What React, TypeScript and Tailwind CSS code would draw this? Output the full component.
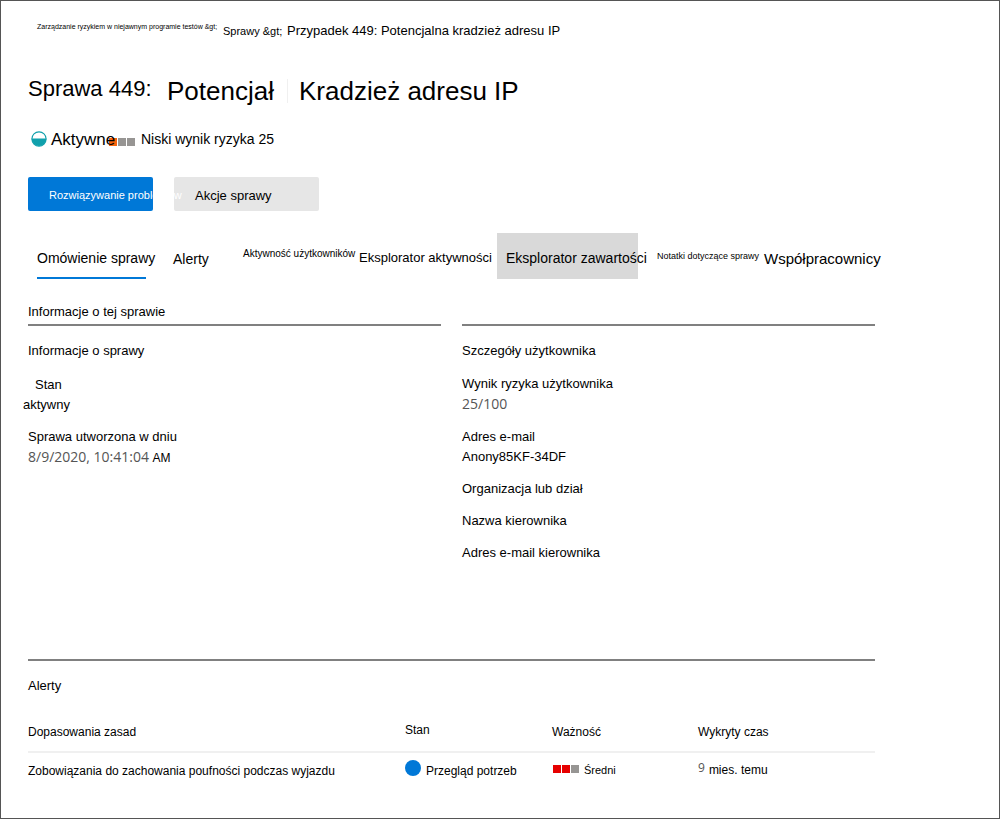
import type { ReactNode } from "react";

const tabBase = "flex h-[46px] shrink-0 items-center whitespace-nowrap";

function Squares({ colors }: { colors: string[] }) {
  return (
    <span className="flex gap-px" aria-hidden="true">
      {colors.map((color, i) => (
        <span key={i} className={`size-[8px] ${color}`} />
      ))}
    </span>
  );
}

function Field({ label, children }: { label: string; children?: ReactNode }) {
  return (
    <div>
      <dt>{label}</dt>
      {children && <dd>{children}</dd>}
    </div>
  );
}

function HalfCircle() {
  return (
    <svg width="16" height="16" viewBox="0 0 16 16" aria-hidden="true">
      <circle cx="8" cy="8" r="7.1" fill="#fff" stroke="#10a0ac" strokeWidth="1.1" />
      <path d="M.6 7.5h14.8a7.4 7.4 0 0 1-14.8 0Z" fill="#10a0ac" />
    </svg>
  );
}

export default function App() {
  return (
    <main className="min-h-screen border border-[#555] bg-white pr-[124px] pl-[27px] font-['Liberation_Sans',Arial,sans-serif] text-[13px] leading-5 text-black">
      <nav aria-label="Breadcrumb" className="flex h-[60px] items-center pl-[9px] whitespace-nowrap">
        <a href="#risk" className="w-[186px] pb-2 text-[7px]">
          Zarządzanie ryzykiem w niejawnym programie testów &amp;gt;
        </a>
        <a href="#cases" className="w-[64px] text-[11px]">Sprawy &amp;gt;</a>
        <span aria-current="page">Przypadek 449: Potencjalna kradzież adresu IP</span>
      </nav>

      <h1 className="flex h-[60px] items-center whitespace-nowrap text-[26px] leading-8">
        <span className="w-[139px] pb-1 text-[22px]">Sprawa 449:</span>
        <span className="w-[121px] border-r border-[#f0f0f0] leading-6">Potencjał</span>
        <span className="pl-[11px]">Kradzież adresu IP</span>
      </h1>

      <div className="flex h-[36px] items-center whitespace-nowrap pl-[3px]">
        <HalfCircle />
        <span className="relative z-10 w-[62px] pt-[2px] pl-1 text-[17px]">Aktywne</span>
        <span className="pt-[6px]">
          <Squares colors={["bg-[#f7630c]", "bg-[#979593]", "bg-[#979593]"]} />
        </span>
        <span className="pl-[6px] text-[14px]">Niski wynik ryzyka 25</span>
      </div>

      <div className="mt-5 flex gap-[21px] whitespace-nowrap">
        <button type="button" className="relative z-10 h-[34px] w-[125px] rounded-[2px] bg-[#0078d7] pt-[2px] pl-[21px] text-left text-[11px] text-white">
          Rozwiązywanie problemów
        </button>
        <button type="button" className="h-[34px] w-[145px] rounded-[2px] bg-[#e6e6e6] pt-1 pl-[21px] text-left">
          Akcje sprawy
        </button>
      </div>

      <nav aria-label="Sprawa" className="mt-[22px] flex pl-[9px] text-[14px]">
        <a href="#overview" aria-current="page" className={`${tabBase} w-[109px] border-b-2 border-[#0078d7] pt-[6px]`}>
          Omówienie sprawy
        </a>
        <a href="#alerts" className={`${tabBase} ml-[27px] w-[70px] pt-[6px]`}>Alerty</a>
        <a href="#activity" className={`${tabBase} w-[116px] pb-1 text-[10px]`}>Aktywność użytkowników</a>
        <a href="#activity-explorer" className={`${tabBase} w-[138px] pt-1 text-[13px]`}>Eksplorator aktywności</a>
        <a href="#content-explorer" className={`${tabBase} w-[141px] bg-[#d9d9d9] pt-1 pl-[9px]`}>Eksplorator zawartości</a>
        <a href="#notes" className={`${tabBase} ml-[19px] w-[107px] text-[9px]`}>Notatki dotyczące sprawy</a>
        <a href="#contributors" className={`${tabBase} pt-[6px] text-[15px]`}>Współpracownicy</a>
      </nav>

      <div className="mt-[22px] grid grid-cols-2 gap-x-[21px]">
        <section>
          <h2 className="h-[25px] border-b-2 border-[#808080] leading-[22px]">Informacje o tej sprawie</h2>
          <h3 className="mt-[15px]">Informacje o sprawy</h3>
          <dl className="mt-[14px] flex flex-col gap-3">
            <div>
              <dt className="pl-[7px]">Stan</dt>
              <dd className="-ml-[5px]">aktywny</dd>
            </div>
            <Field label="Sprawa utworzona w dniu">
              <span className="font-['Open_Sans',sans-serif] text-[14px] text-[#555]">8/9/2020, 10:41:04</span>{" "}
              <span className="text-[12px]">AM</span>
            </Field>
          </dl>
        </section>
        <section>
          <div className="h-[25px] border-b-2 border-[#808080]" />
          <h3 className="mt-[15px]">Szczegóły użytkownika</h3>
          <dl className="mt-[13px] flex flex-col gap-3">
            <Field label="Wynik ryzyka użytkownika">
              <span className="font-['Open_Sans',sans-serif] text-[14px] text-[#555]">25/100</span>
            </Field>
            <Field label="Adres e-mail">Anony85KF-34DF</Field>
            <Field label="Organizacja lub dział" />
            <Field label="Nazwa kierownika" />
            <Field label="Adres e-mail kierownika" />
          </dl>
        </section>
      </div>

      <section className="mt-24 border-t-2 border-[#808080] pt-[15px] pb-5">
        <h2>Alerty</h2>
        <table className="mt-[22px] w-full table-fixed text-left text-[12px]">
          <colgroup>
            <col className="w-[377px]" />
            <col className="w-[147px]" />
            <col className="w-[146px]" />
            <col />
          </colgroup>
          <thead>
            <tr className="h-[34px] border-b-2 border-[#f0f0f0] align-top *:font-normal">
              <th scope="col" className="pt-1">Dopasowania zasad</th>
              <th scope="col" className="pt-[2px]">Stan</th>
              <th scope="col" className="pt-1">Ważność</th>
              <th scope="col" className="pt-1">Wykryty czas</th>
            </tr>
          </thead>
          <tbody>
            <tr className="h-[34px]">
              <td className="pt-[2px]">Zobowiązania do zachowania poufności podczas wyjazdu</td>
              <td>
                <div className="flex h-5 gap-[5px]">
                  <span className="size-4 rounded-full bg-[#0078d7]" />
                  <span className="pt-px">Przegląd potrzeb</span>
                </div>
              </td>
              <td>
                <div className="flex gap-[5px] pl-px text-[11px]">
                  <span className="pt-[5px]">
                    <Squares colors={["bg-[#e60000]", "bg-[#e60000]", "bg-[#979593]"]} />
                  </span>
                  <span>Średni</span>
                </div>
              </td>
              <td>
                <div className="flex gap-1">
                  <span className="font-['Open_Sans',sans-serif] leading-4 text-[#555]">9</span>
                  <span>mies. temu</span>
                </div>
              </td>
            </tr>
          </tbody>
        </table>
      </section>
    </main>
  );
}
